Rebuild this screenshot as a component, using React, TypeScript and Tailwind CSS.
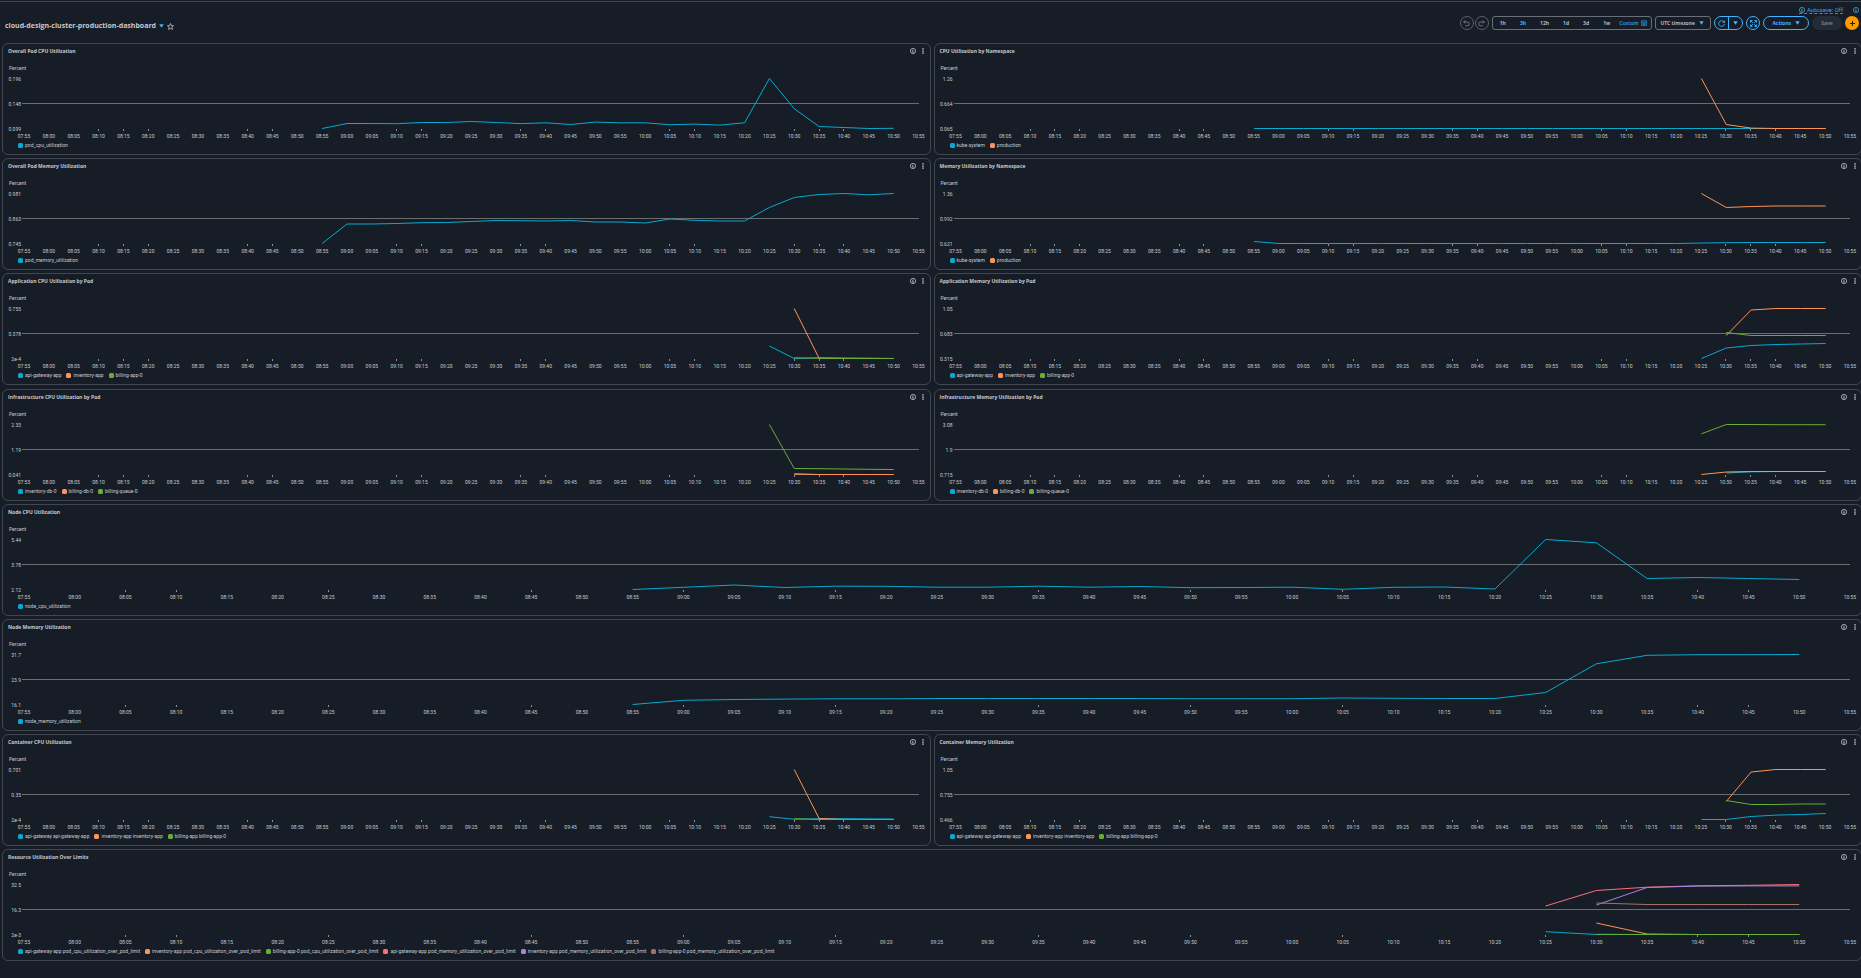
import React from "react";

const BLUE = "#08aad2";
const ORANGE = "#ff9356";
const GREEN = "#69ae34";
const RED = "#fe6e73";
const PURPLE = "#a783e1";
const BROWN = "#a87065";

/** A line: `from` is the index of its first 5-minute slot, `ys` are heights on a 0 (top) to 50 (bottom) scale. */
type Series = { name: string; color: string; from: number; ys: number[] };
type Widget = { title: string; y: [string, string, string]; series: Series[]; wide?: boolean };

const times = Array.from({ length: 37 }, (_, i) => {
  const m = 7 * 60 + 55 + i * 5;
  return `${String(Math.floor(m / 60)).padStart(2, "0")}:${String(m % 60).padStart(2, "0")}`;
});

const halfTicks = new Set([3, 4, 5, 9, 10, 15, 16, 20, 21, 26, 27, 31, 32, 33]);
const wideTicks = new Set([2, 3, 6, 10, 13, 16, 20, 23, 26, 30, 33, 34]);

const s = (name: string, color: string, from: number, ys: number[]): Series => ({ name, color, from, ys });

const rows: Widget[][] = [
  [
    {
      title: "Overall Pod CPU Utilization",
      y: ["0.196", "0.148", "0.099"],
      series: [
        s("pod_cpu_utilization", BLUE, 12, [50, 45, 45, 45.2, 44, 44, 43, 44, 45.1, 44.3, 46, 43.6, 44.3, 44.3, 46.2, 45.6, 46.6, 44.3, 0, 30.2, 48, 49, 50, 49.8]),
      ],
    },
    {
      title: "CPU Utilization by Namespace",
      y: ["1.26", "0.664", "0.065"],
      series: [
        s("kube-system", BLUE, 12, Array(24).fill(50)),
        s("production", ORANGE, 30, [0, 46, 49.6, 50, 50, 50]),
      ],
    },
  ],
  [
    {
      title: "Overall Pod Memory Utilization",
      y: ["0.981", "0.863", "0.745"],
      series: [
        s("pod_memory_utilization", BLUE, 12, [50, 30.5, 30.5, 30, 29.2, 29, 28, 27, 27.2, 27.5, 27, 28.5, 28.5, 29.5, 25.5, 26.8, 27.5, 27.5, 14, 4, 1, 0, 1.3, 0]),
      ],
    },
    {
      title: "Memory Utilization by Namespace",
      y: ["1.36", "0.992", "0.621"],
      series: [
        s("kube-system", BLUE, 12, [48, ...Array(17).fill(50), 49.5, 49.2, 49, 49, 49, 49]),
        s("production", ORANGE, 30, [0, 14, 13, 12.5, 12.5, 12.5]),
      ],
    },
  ],
  [
    {
      title: "Application CPU Utilization by Pod",
      y: ["0.755", "0.378", "2e-4"],
      series: [
        s("api-gateway-app", BLUE, 30, [37.5, 50, 49.2, 49.4, 49.6, 50]),
        s("inventory-app", ORANGE, 31, [0, 49.8, 50, 50, 50]),
        s("billing-app-0", GREEN, 31, [49.3, 49.8, 50, 50, 50]),
      ],
    },
    {
      title: "Application Memory Utilization by Pod",
      y: ["1.05", "0.683", "0.315"],
      series: [
        s("api-gateway-app", BLUE, 30, [50, 39.5, 37, 36, 35.5, 35]),
        s("inventory-app", ORANGE, 31, [27, 1.5, 0, 0, 0]),
        s("billing-app-0", GREEN, 31, [24, 27, 27, 27, 27]),
      ],
    },
  ],
  [
    {
      title: "Infrastructure CPU Utilization by Pod",
      y: ["2.33", "1.19", "0.041"],
      series: [
        s("inventory-db-0", BLUE, 31, [49, 50, 50, 50, 50]),
        s("billing-db-0", ORANGE, 31, [49.8, 50, 50, 50, 50]),
        s("billing-queue-0", GREEN, 30, [0, 44, 44.2, 44.5, 44.8, 45]),
      ],
    },
    {
      title: "Infrastructure Memory Utilization by Pod",
      y: ["3.08", "1.9", "0.715"],
      series: [
        s("inventory-db-0", BLUE, 31, [48.5, 47.3, 47, 47, 47]),
        s("billing-db-0", ORANGE, 30, [50, 47.5, 47, 47, 47, 47]),
        s("billing-queue-0", GREEN, 30, [9.3, 0, 0, 0.2, 0.2, 0.2]),
      ],
    },
  ],
  [
    {
      title: "Node CPU Utilization",
      y: ["5.44", "3.78", "2.12"],
      wide: true,
      series: [
        s("node_cpu_utilization", BLUE, 12, [50, 47.8, 45.5, 48, 46.7, 46.8, 47.7, 47.7, 46.7, 47.7, 47, 48.2, 48, 47.7, 49.8, 47.8, 47.5, 49.5, 0, 3.3, 39, 38, 39, 40]),
      ],
    },
  ],
  [
    {
      title: "Node Memory Utilization",
      y: ["31.7", "23.9", "16.1"],
      wide: true,
      series: [
        s("node_memory_utilization", BLUE, 12, [50, 45.8, 45, 44.6, 44.3, 44.3, 44, 44, 44, 44, 44, 44.2, 44.2, 44.2, 43.5, 43.8, 44, 44, 38, 9.3, 0.8, 0.2, 0.2, 0]),
      ],
    },
  ],
  [
    {
      title: "Container CPU Utilization",
      y: ["0.701", "0.35", "2e-4"],
      series: [
        s("api-gateway api-gateway-app", BLUE, 30, [47.2, 49.8, 49.2, 49.2, 49.4, 49.5]),
        s("inventory-app inventory-app", ORANGE, 31, [0, 49, 50, 50, 50]),
        s("billing-app billing-app-0", GREEN, 31, [49.2, 50, 50, 50, 50]),
      ],
    },
    {
      title: "Container Memory Utilization",
      y: ["1.05", "0.755", "0.466"],
      series: [
        s("api-gateway api-gateway-app", BLUE, 30, [50, 50, 47, 45.6, 45, 44]),
        s("inventory-app inventory-app", ORANGE, 31, [32, 2.5, 0, 0, 0]),
        s("billing-app billing-app-0", GREEN, 31, [31, 35, 35, 34.5, 34.5]),
      ],
    },
  ],
  [
    {
      title: "Resource Utilization Over Limits",
      y: ["32.5", "16.3", "2e-3"],
      wide: true,
      series: [
        s("api-gateway-app pod_cpu_utilization_over_pod_limit", BLUE, 30, [47.2, 50, 50, 50, 50, 50]),
        s("inventory-app pod_cpu_utilization_over_pod_limit", ORANGE, 31, [38.5, 49.5, 50, 50, 50]),
        s("billing-app-0 pod_cpu_utilization_over_pod_limit", GREEN, 31, [49.8, 50, 50, 50, 50]),
        s("api-gateway-app pod_memory_utilization_over_pod_limit", RED, 30, [21.5, 6, 2.7, 1.3, 0.8, 0]),
        s("inventory-app pod_memory_utilization_over_pod_limit", PURPLE, 31, [20.5, 3, 1.6, 1.4, 1.4]),
        s("billing-app-0 pod_memory_utilization_over_pod_limit", BROWN, 31, [18.5, 20, 20, 20, 20]),
      ],
    },
  ],
];

function InfoIcon({ className = "" }: { className?: string }) {
  return (
    <svg viewBox="0 0 16 16" className={`size-[6px] shrink-0 ${className}`} fill="none" stroke="currentColor" strokeWidth="2" aria-hidden="true">
      <circle cx="8" cy="8" r="7" />
      <path d="M8 11V7M8 6V4M6 11h4M6 7.5h2" />
    </svg>
  );
}

function Caret({ className = "" }: { className?: string }) {
  return (
    <svg viewBox="0 0 10 8" className={`h-[4px] w-[5px] shrink-0 ${className}`} fill="currentColor" aria-hidden="true">
      <path d="M0.5 0.5h9L5 7.5z" />
    </svg>
  );
}

function UndoIcon({ flip = false }: { flip?: boolean }) {
  return (
    <svg viewBox="0 0 16 16" className={flip ? "size-[7px] -scale-x-100" : "size-[7px]"} fill="none" stroke="currentColor" strokeWidth="2" aria-hidden="true">
      <path d="M5 1 1.5 4.5 5 8M1.5 4.5H10a4.3 4.3 0 0 1 0 8.800H5" />
    </svg>
  );
}

function Chart({ widget }: { widget: Widget }) {
  const ticks = widget.wide ? wideTicks : halfTicks;
  return (
    <div className="flex">
      <div className="flex h-[51px] w-[18px] shrink-0 flex-col justify-between text-right">
        {widget.y.map((v) => (
          <span key={v} className="flex h-px items-center justify-end">
            {v}
          </span>
        ))}
      </div>
      <div className="relative ml-px min-w-0 flex-1 pr-[11px] pl-[2px]">
        <div className="absolute top-[25px] right-[11px] left-0 h-px bg-[#6c6d6e]" />
        <svg viewBox="0 -0.5 36 51" preserveAspectRatio="none" className="relative block h-[51px] w-full overflow-visible" fill="none" role="img" aria-label={widget.title}>
          {widget.series.map((line) => (
            <polyline
              key={line.name}
              points={line.ys.map((y, i) => `${line.from + i},${y}`).join(" ")}
              stroke={line.color}
              strokeWidth="1"
              vectorEffect="non-scaling-stroke"
            />
          ))}
        </svg>
        <div className="flex justify-between">
          {times.map((t, i) => (
            <div key={t} className="flex w-0 flex-col items-center">
              <span className={ticks.has(i) ? "h-[2px] w-px bg-[#8a8d92]" : "h-[2px] w-px"} />
              <span className="mt-[1px] leading-[8px] whitespace-nowrap">{t}</span>
            </div>
          ))}
        </div>
      </div>
    </div>
  );
}

function WidgetCard({ widget }: { widget: Widget }) {
  return (
    <section className="h-[112px] min-w-0 flex-1 rounded-[6px] border border-[#424650] text-[5px] text-[#c9ccd2]">
      <header className="flex h-[14px] items-center justify-between pr-[3px] pl-[5px]">
        <h2 className="font-bold text-[#c6c9cf]">{widget.title}</h2>
        <div className="flex items-center gap-[4px] text-[#c6c9cf]">
          <button type="button" aria-label="Widget details">
            <InfoIcon />
          </button>
          <button type="button" aria-label="Widget actions" className="flex w-[7px] justify-center">
            <svg viewBox="0 0 3 12" className="h-[6px] w-[2px]" fill="currentColor" aria-hidden="true">
              <path d="M0 0.500h3v2.500H0zM0 4.800h3v2.500H0zM0 9.100h3v2.500H0z" />
            </svg>
          </button>
        </div>
      </header>
      <div className="pt-[6px] font-['Roboto','Open_Sans',sans-serif]">
        <div className="mb-[6px] pl-[6px] leading-[8px]">Percent</div>
        <Chart widget={widget} />
        <ul className="mt-px flex items-center gap-[5px] pl-[15px] leading-[8px]">
          {widget.series.map((line) => (
            <li key={line.name} className="flex items-center gap-[2px] whitespace-nowrap">
              <svg viewBox="0 0 5 5" className="size-[5px]" aria-hidden="true">
                <rect width="5" height="5" rx="1.500" fill={line.color} />
              </svg>
              {line.name}
            </li>
          ))}
        </ul>
      </div>
    </section>
  );
}

function Toolbar() {
  return (
    <div className="flex h-[14px] items-stretch gap-[3px] font-bold text-[#b4b7be]">
      <div className="flex gap-px text-[#7c8089]">
        <button type="button" aria-label="Undo" className="flex w-[14px] items-center justify-center rounded-full border border-[#5c6069]">
          <UndoIcon />
        </button>
        <button type="button" aria-label="Redo" className="flex w-[14px] items-center justify-center rounded-full border border-[#5c6069]">
          <UndoIcon flip />
        </button>
      </div>
      <div className="flex items-center rounded-[3px] border border-[#6a6e77] pr-[4px]">
        {["1h", "3h", "12h", "1d", "3d", "1w"].map((r) => (
          <button key={r} type="button" aria-pressed={r === "3h"} className={r === "3h" ? "px-[7px] text-[#42b4ff]" : "px-[7px]"}>
            {r}
          </button>
        ))}
        <button type="button" className="flex items-center gap-[3px] pl-[2px] text-[#2f8fd0]">
          Custom
          <svg viewBox="0 0 16 16" className="size-[6px]" fill="none" stroke="currentColor" strokeWidth="2" aria-hidden="true">
            <path d="M1 2h14v13H1zM1 6h14M4 9h8M4 12h8" />
          </svg>
        </button>
      </div>
      <label className="flex items-center gap-[4px] rounded-[3px] border border-[#6a6e77] pr-[6px] pl-[4px]">
        <select aria-label="Timezone" className="appearance-none bg-transparent font-bold outline-none">
          <option>UTC timezone</option>
        </select>
        <Caret className="text-[#42b4ff]" />
      </label>
      <div className="flex rounded-full border border-[#42b4ff] text-[#42b4ff]">
        <button type="button" aria-label="Refresh" className="flex w-[14px] items-center justify-center border-r border-[#42b4ff]">
          <svg viewBox="0 0 16 16" className="size-[7px]" fill="none" stroke="currentColor" strokeWidth="2" aria-hidden="true">
            <path d="M14.500 9A6.500 6.500 0 1 1 12.500 3.300L15 5.500M15 1v4.500h-4.500" />
          </svg>
        </button>
        <button type="button" aria-label="Refresh options" className="flex w-[13px] items-center justify-center">
          <Caret />
        </button>
      </div>
      <button type="button" aria-label="Full screen" className="flex w-[14px] items-center justify-center rounded-full border border-[#42b4ff] text-[#42b4ff]">
        <svg viewBox="0 0 16 16" className="size-[7px]" fill="none" stroke="currentColor" strokeWidth="2" aria-hidden="true">
          <path d="M1 6V1h5M10 1h5v5M15 10v5h-5M6 15H1v-5M1 1l5.500 5.500M15 1 9.500 6.500M15 15 9.500 9.500M1 15l5.500-5.500" />
        </svg>
      </button>
      <button type="button" className="flex items-center gap-[4px] rounded-full border border-[#42b4ff] px-[8px] text-[#42b4ff]">
        Actions
        <Caret />
      </button>
      <button type="button" disabled className="w-[30px] rounded-full bg-[#232b37] text-[#7a7e87]">
        Save
      </button>
      <button type="button" aria-label="Add widget" className="flex w-[14px] items-center justify-center rounded-full bg-[#ff9900] text-[#161d26]">
        <svg viewBox="0 0 5 5" className="size-[5px]" fill="currentColor" aria-hidden="true">
          <path d="M2 0h1v2h2v1H3v2H2V3H0V2h2z" />
        </svg>
      </button>
    </div>
  );
}

export default function App() {
  return (
    <main className="min-h-screen overflow-hidden bg-[#161d26] pt-px font-['Open_Sans','Noto_Sans',sans-serif] text-[5px] leading-[8px]">
      <header className="flex justify-between border-t border-[#424650] pt-[4px] pr-[2px] pb-[12px] pl-[5px]">
        <div className="flex items-center gap-[3px] pt-[15px] text-[#c6c9cf]">
          <h1 className="text-[7px] leading-[10px] font-bold">cloud-design-cluster-production-dashboard</h1>
          <button type="button" aria-label="Switch dashboard" className="text-[#42b4ff]">
            <Caret />
          </button>
          <button type="button" aria-label="Add to favorites">
            <svg viewBox="0 0 16 16" className="size-[7px]" fill="none" stroke="currentColor" strokeWidth="1.800" strokeLinejoin="round" aria-hidden="true">
              <path d="M8 1.200 10 6l5 .4-3.800 3.300 1.200 5L8 12l-4.400 2.700 1.200-5L1 6.400 6 6z" />
            </svg>
          </button>
        </div>
        <div className="flex flex-col items-end gap-[2px]">
          <div className="flex h-[8px] items-center gap-[10px] text-[#42a4e6]">
            <button type="button" className="flex h-[8px] items-center gap-[2px] border-b border-dashed border-[#2f8fd0] font-['Roboto','Open_Sans',sans-serif] text-[6px]">
              <InfoIcon />
              Autosave: Off
            </button>
            <button type="button" aria-label="Help">
              <InfoIcon />
            </button>
          </div>
          <Toolbar />
        </div>
      </header>
      <div className="-mr-px ml-[2px] flex flex-col gap-[3px]">
        {rows.map((row, i) => (
          <div key={row[0].title} className={i === 3 ? "mt-px flex gap-[3px]" : "flex gap-[3px]"}>
            {row.map((w) => (
              <WidgetCard key={w.title} widget={w} />
            ))}
          </div>
        ))}
      </div>
    </main>
  );
}
